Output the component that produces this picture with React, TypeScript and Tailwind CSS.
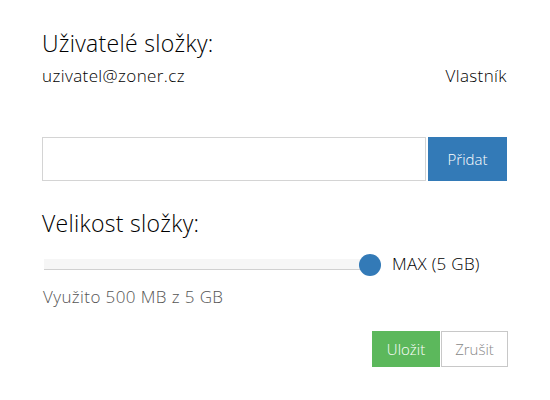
import { useState } from "react";

export default function App() {
    const [email, setEmail] = useState("")

    return (
        <div className="w-[550px] h-[400px] bg-white px-[42px] pt-[28px] text-black" style={{ fontFamily: "'Open Sans', sans-serif" }}>
            <h2 className="text-[23px] leading-[30px] font-light tracking-[0.3px]">Uživatelé složky:</h2>
            <div className="flex justify-between items-center mt-[7px] text-[17px] leading-[22px] font-light tracking-[0.4px] pr-[1px]">
                <span>uzivatel@zoner.cz</span>
                <span>Vlastník</span>
            </div>

            <div className="flex mt-[50px] w-[465px]">
                <input
                    className="flex-1 h-[44px] border border-[#d4d4d4] px-3 text-[15px] outline-none"
                    value={email}
                    onChange={e => setEmail(e.target.value)}
                />
                <button className="ml-[2px] w-[79px] h-[44px] bg-[#337ab7] text-white text-[15px] font-light">Přidat</button>
            </div>

            <h2 className="text-[23px] leading-[30px] font-light tracking-[0.3px] mt-[27px]">Velikost složky:</h2>
            <div className="flex items-center h-[22px] mt-[15px] pl-[2px]">
                <div className="relative w-[326px] h-[11px] bg-[#f6f6f6] border-b border-[#d0d0d0]">
                    <div className="absolute right-[-11px] top-[-5px] w-[22px] h-[22px] rounded-full bg-[#337ab7]" />
                </div>
                <span className="ml-[22px] text-[17px] leading-[22px] font-light tracking-[0.3px]">MAX (5 GB)</span>
            </div>
            <p className="mt-[11px] pl-[1px] text-[17px] leading-[22px] font-light tracking-[0.4px] text-[#555]">Využito 500 MB z 5 GB</p>

            <div className="flex justify-end mt-[23px] w-[466px]">
                <button className="w-[68px] h-[36px] bg-[#5cb85c] text-white text-[15px] font-light">Uložit</button>
                <button className="ml-[1px] w-[67px] h-[36px] border border-[#c8c8c8] text-[#888] text-[15px] font-light">Zrušit</button>
            </div>
        </div>
    )
}
